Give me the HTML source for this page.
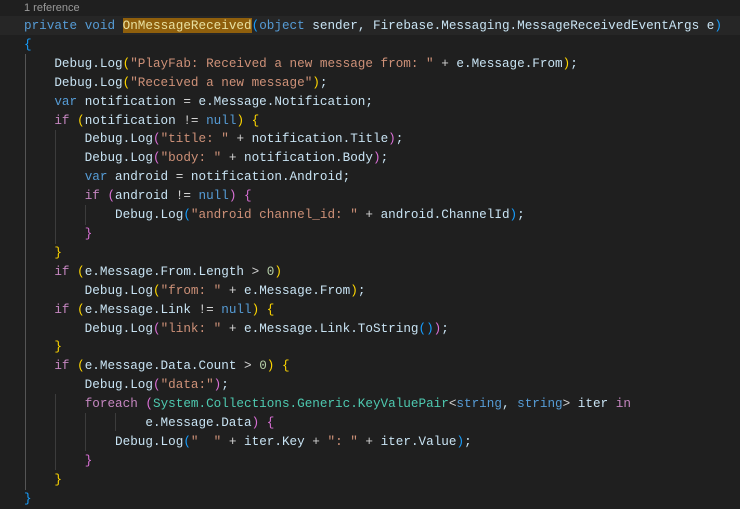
<!DOCTYPE html>
<html><head><meta charset="utf-8"><style>
html,body{margin:0;padding:0;background:#1f1f1f;width:740px;height:507px;overflow:hidden}
.lens{position:absolute;left:24px;top:2px;font:11px "Liberation Sans",sans-serif;color:#9a9a9a}
.hl{position:absolute;left:0;top:16px;width:740px;height:19px;background:#262626}
.code{position:absolute;left:24px;top:17px;font:12.65px/18.9px "Liberation Mono",monospace;color:#c8e3f3;white-space:pre}
.g{position:absolute;width:1px;background:#3c3c3c}
.k{color:#569cd6}.c{color:#c586c0}.s{color:#ce9178}.t{color:#4ec9b0}.n{color:#b5cea8}.o{color:#d4d4d4}
.b1{color:#ffd700}.b2{color:#da70d6}.b3{color:#179fff}
.f{background:#8f5f0c;color:#e8e0a0}
</style></head><body>
<div class="hl"></div>
<div class="lens">1 reference</div>
<div class="g" style="left:25px;top:54px;height:436px;background:#555"></div>
<div class="g" style="left:55px;top:130px;height:114px"></div>
<div class="g" style="left:85px;top:205px;height:20px"></div>
<div class="g" style="left:55px;top:394px;height:76px"></div>
<div class="g" style="left:85px;top:413px;height:38px"></div>
<div class="g" style="left:115px;top:413px;height:18px"></div>
<div class="code"><span class="k">private</span> <span class="k">void</span> <span class="f">OnMessageReceived</span><span class="b3">(</span><span class="k">object</span> sender, Firebase.Messaging.MessageReceivedEventArgs e<span class="b3">)</span>
<span class="b3">{</span>
    Debug.Log<span class="b1">(</span><span class="s">"PlayFab: Received a new message from: "</span> <span class="o">+</span> e.Message.From<span class="b1">)</span>;
    Debug.Log<span class="b1">(</span><span class="s">"Received a new message"</span><span class="b1">)</span>;
    <span class="k">var</span> notification <span class="o">=</span> e.Message.Notification;
    <span class="c">if</span> <span class="b1">(</span>notification <span class="o">!=</span> <span class="k">null</span><span class="b1">)</span> <span class="b1">{</span>
        Debug.Log<span class="b2">(</span><span class="s">"title: "</span> <span class="o">+</span> notification.Title<span class="b2">)</span>;
        Debug.Log<span class="b2">(</span><span class="s">"body: "</span> <span class="o">+</span> notification.Body<span class="b2">)</span>;
        <span class="k">var</span> android <span class="o">=</span> notification.Android;
        <span class="c">if</span> <span class="b2">(</span>android <span class="o">!=</span> <span class="k">null</span><span class="b2">)</span> <span class="b2">{</span>
            Debug.Log<span class="b3">(</span><span class="s">"android channel_id: "</span> <span class="o">+</span> android.ChannelId<span class="b3">)</span>;
        <span class="b2">}</span>
    <span class="b1">}</span>
    <span class="c">if</span> <span class="b1">(</span>e.Message.From.Length <span class="o">&gt;</span> <span class="n">0</span><span class="b1">)</span>
        Debug.Log<span class="b1">(</span><span class="s">"from: "</span> <span class="o">+</span> e.Message.From<span class="b1">)</span>;
    <span class="c">if</span> <span class="b1">(</span>e.Message.Link <span class="o">!=</span> <span class="k">null</span><span class="b1">)</span> <span class="b1">{</span>
        Debug.Log<span class="b2">(</span><span class="s">"link: "</span> <span class="o">+</span> e.Message.Link.ToString<span class="b3">()</span><span class="b2">)</span>;
    <span class="b1">}</span>
    <span class="c">if</span> <span class="b1">(</span>e.Message.Data.Count <span class="o">&gt;</span> <span class="n">0</span><span class="b1">)</span> <span class="b1">{</span>
        Debug.Log<span class="b2">(</span><span class="s">"data:"</span><span class="b2">)</span>;
        <span class="c">foreach</span> <span class="b2">(</span><span class="t">System.Collections.Generic.</span><span class="t">KeyValuePair</span><span class="o">&lt;</span><span class="k">string</span>, <span class="k">string</span><span class="o">&gt;</span> iter <span class="c">in</span>
                e.Message.Data<span class="b2">)</span> <span class="b2">{</span>
            Debug.Log<span class="b3">(</span><span class="s">"  "</span> <span class="o">+</span> iter.Key <span class="o">+</span> <span class="s">": "</span> <span class="o">+</span> iter.Value<span class="b3">)</span>;
        <span class="b2">}</span>
    <span class="b1">}</span>
<span class="b3">}</span></div>
</body></html>
